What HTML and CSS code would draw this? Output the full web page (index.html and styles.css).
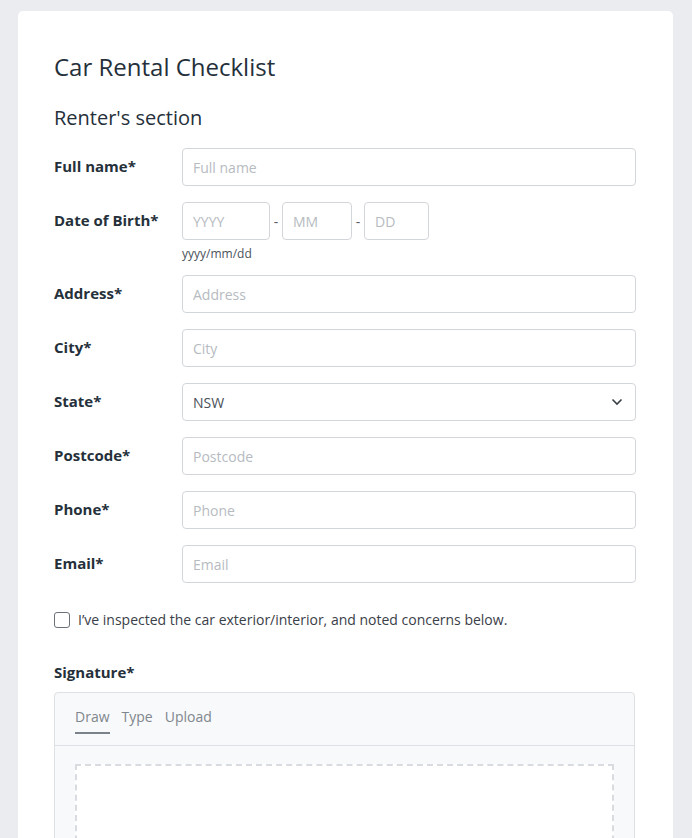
FILE: index.html
```html
<!DOCTYPE html>
<html lang="en">

<head>
    <meta charset="UTF-8">
    <meta name="viewport" content="width=device-width, initial-scale=1.0">
    <title>Car Rental Checklist</title>
    <link rel="stylesheet" href="styles.css">
</head>

<body>
    <div class="card">
        <h1 class="title">Car Rental Checklist</h1>
        <h2 class="section">Renter's section</h2>

        <div class="row">
            <label class="label">Full name*</label>
            <input class="field" type="text" placeholder="Full name">
        </div>

        <div class="row">
            <label class="label">Date of Birth*</label>
            <div class="control">
                <div class="date">
                    <input class="field year" type="text" placeholder="YYYY">
                    <span class="dash">-</span>
                    <input class="field month" type="text" placeholder="MM">
                    <span class="dash">-</span>
                    <input class="field day" type="text" placeholder="DD">
                </div>
                <div class="hint">yyyy/mm/dd</div>
            </div>
        </div>

        <div class="row">
            <label class="label">Address*</label>
            <input class="field" type="text" placeholder="Address">
        </div>

        <div class="row">
            <label class="label">City*</label>
            <input class="field" type="text" placeholder="City">
        </div>

        <div class="row">
            <label class="label">State*</label>
            <div class="select">
                <span>NSW</span>
                <svg width="12" height="8" viewBox="0 0 12 8">
                    <path d="M1.5 1.5 L6 6 L10.5 1.5" fill="none" stroke="#3a3f45" stroke-width="1.6" />
                </svg>
            </div>
        </div>

        <div class="row">
            <label class="label">Postcode*</label>
            <input class="field" type="text" placeholder="Postcode">
        </div>

        <div class="row">
            <label class="label">Phone*</label>
            <input class="field" type="text" placeholder="Phone">
        </div>

        <div class="row">
            <label class="label">Email*</label>
            <input class="field" type="text" placeholder="Email">
        </div>

        <label class="check">
            <span class="box"></span>
            I’ve inspected the car exterior/interior, and noted concerns below.
        </label>

        <div class="sig-label">Signature*</div>
        <div class="sig">
            <div class="tabs">
                <span class="tab active">Draw</span>
                <span class="tab">Type</span>
                <span class="tab">Upload</span>
            </div>
            <div class="sig-body">
                <div class="pad"></div>
            </div>
        </div>
    </div>
</body>

</html>
```

FILE: styles.css
```css
body,
html {
    margin: 0;
    padding: 0;
}

* {
    box-sizing: border-box;
}

body {
    background: #ebecf0;
    font-family: "Open Sans", "Noto Sans", sans-serif;
    color: #25303a;
    padding: 11px 19px 0 18px;
    height: 838px;
    overflow: hidden;
}

.card {
    background: #fff;
    border-radius: 5px;
    padding: 41px 37px 40px 36px;
}

.title {
    margin: 0;
    font-size: 24px;
    font-weight: 400;
    line-height: 30px;
}

.section {
    margin: 23px 0 17px;
    font-size: 20px;
    font-weight: 400;
    line-height: 26px;
}

.row {
    display: flex;
    align-items: flex-start;
    margin-bottom: 16px;
}

.label {
    width: 128px;
    flex: none;
    font-size: 15px;
    font-weight: 700;
    line-height: 38px;
    margin-top: -1px;
}

.field {
    flex: 1;
    height: 38px;
    border: 1px solid #d2d6db;
    border-radius: 4px;
    padding: 0 10px;
    font-family: inherit;
    font-size: 14px;
    color: #25303a;
    outline: none;
    background: #fff;
}

.field::placeholder {
    color: #b6bbc1;
}

.control {
    flex: 1;
}

.date {
    display: flex;
    align-items: center;
}

.date .field {
    flex: none;
}

.year {
    width: 88px;
}

.month {
    width: 70px;
}

.day {
    width: 65px;
}

.dash {
    width: 12px;
    text-align: center;
    font-size: 14px;
    color: #5a6068;
}

.hint {
    font-size: 12px;
    color: #4a525a;
    margin-top: 8px;
    line-height: 11px;
}

.select {
    flex: 1;
    height: 38px;
    border: 1px solid #d2d6db;
    border-radius: 4px;
    padding: 0 12px 0 10px;
    display: flex;
    align-items: center;
    justify-content: space-between;
    font-size: 14px;
    color: #4a5058;
}

.check {
    display: flex;
    align-items: center;
    gap: 8px;
    margin-top: 27px;
    font-size: 14px;
    color: #3a4048;
}

.box {
    width: 16px;
    height: 16px;
    border: 1px solid #6c7279;
    border-radius: 3px;
}

.sig-label {
    margin-top: 32px;
    font-size: 15px;
    font-weight: 700;
    line-height: 22px;
}

.sig {
    margin-top: 9px;
    border: 1px solid #dde0e4;
    border-radius: 4px;
    background: #f8f9fa;
    margin-right: 1px;
}

.tabs {
    display: flex;
    gap: 12px;
    padding: 13px 20px 0;
    height: 53px;
    border-bottom: 1px solid #dde0e4;
}

.tab {
    font-size: 14px;
    color: #80868d;
    height: 28px;
    line-height: 22px;
}

.tab.active {
    border-bottom: 2px solid #7c8289;
}

.sig-body {
    padding: 18px 20px;
}

.pad {
    height: 200px;
    border: 2px dashed #d8dbdf;
    background: #fff;
}
```
